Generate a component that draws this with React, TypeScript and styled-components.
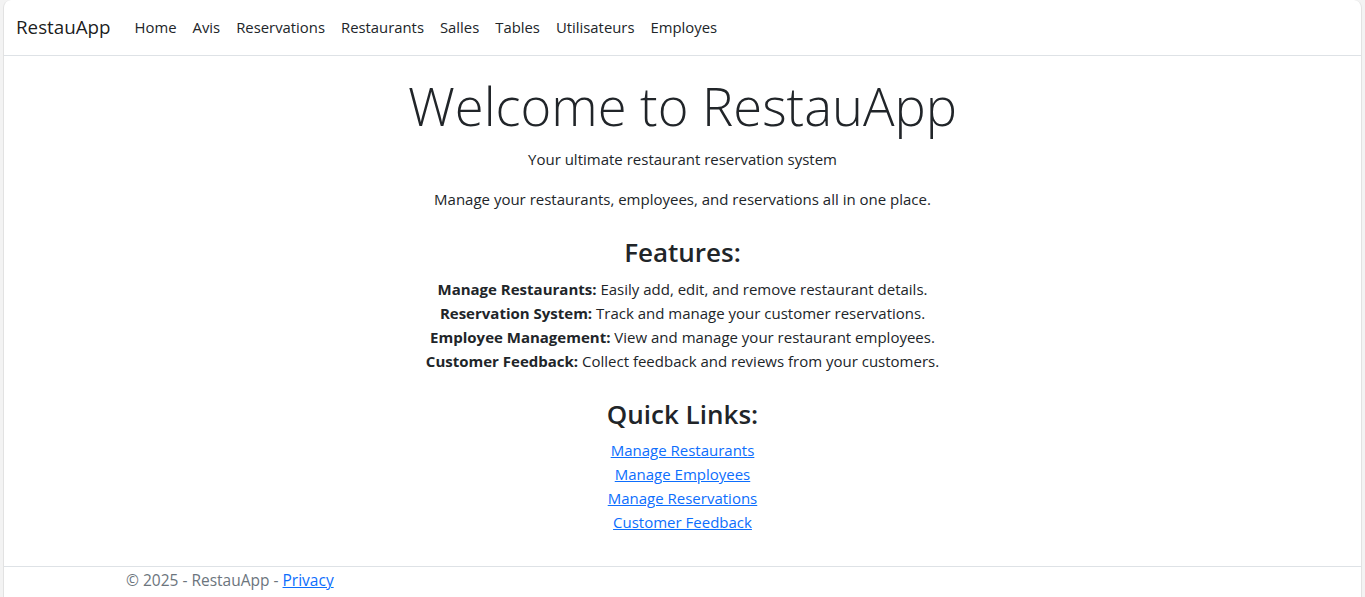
import React from "react";
import styled, { createGlobalStyle } from "styled-components";

const Global = createGlobalStyle`
  html, body { margin: 0; padding: 0; }
  body {
    background: #f3f3f3;
    font-family: "Open Sans", "Noto Sans", Arial, sans-serif;
    font-size: 15px;
    line-height: 24px;
    color: #212529;
  }
  * { box-sizing: border-box; }
`;

const Frame = styled.div`
  margin: 0 3px;
  min-height: 597px;
  background: #fff;
  border-left: 1px solid #e2e2e2;
  border-right: 1px solid #e2e2e2;
  border-top-left-radius: 8px;
  border-top-right-radius: 8px;
  display: flex;
  flex-direction: column;
`;

const NavBar = styled.nav`
  height: 56px;
  border-bottom: 1px solid #dee2e6;
  display: flex;
  align-items: center;
  padding: 0 12px 2px;
`;

const Brand = styled.a`
  font-size: 18.8px;
  line-height: 30px;
  color: rgba(0, 0, 0, 0.9);
  text-decoration: none;
  margin-right: 16px;
`;

const NavList = styled.ul`
  list-style: none;
  display: flex;
  margin: 0;
  padding: 0;
`;

const NavLink = styled.a`
  display: block;
  padding: 8px;
  font-size: 14.85px;
  line-height: 24px;
  color: #212529;
  text-decoration: none;
`;

const Main = styled.main`
  flex: 1;
  text-align: center;
  padding-top: 16px;
`;

const Title = styled.h1`
  font-size: 52.5px;
  font-weight: 300;
  line-height: 67px;
  margin: 0 0 8px;
`;

const Para = styled.p`
  margin: 0 0 16px;
`;

const SectionTitle = styled.h3`
  font-size: 26px;
  font-weight: 600;
  line-height: 33.6px;
  margin: 24px 0 8px;
  position: relative;
  top: 1px;
`;

const PlainList = styled.ul`
  list-style: none;
  margin: 0 0 16px;
  padding: 0;
`;

const Link = styled.a`
  color: #0d6efd;
  text-decoration: underline;
`;

const Footer = styled.footer`
  border-top: 1px solid #dee2e6;
  height: 31px;
  color: #6c757d;
  font-size: 15.5px;
  line-height: 27px;
  margin-top: 3px;
`;

const FooterInner = styled.div`
  max-width: 1137px;
  margin: 0 auto;
  padding: 0 12px;
  white-space: nowrap;
`;

const navItems = ["Home", "Avis", "Reservations", "Restaurants", "Salles", "Tables", "Utilisateurs", "Employes"];

const features: [string, string][] = [
  ["Manage Restaurants:", "Easily add, edit, and remove restaurant details."],
  ["Reservation System:", "Track and manage your customer reservations."],
  ["Employee Management:", "View and manage your restaurant employees."],
  ["Customer Feedback:", "Collect feedback and reviews from your customers."],
];

const links = ["Manage Restaurants", "Manage Employees", "Manage Reservations", "Customer Feedback"];

export default function App() {
  return (
    <>
      <Global />
      <Frame>
        <NavBar>
          <Brand href="#">RestauApp</Brand>
          <NavList>
            {navItems.map((n) => (
              <li key={n}>
                <NavLink href="#">{n}</NavLink>
              </li>
            ))}
          </NavList>
        </NavBar>
        <Main>
          <Title>Welcome to RestauApp</Title>
          <Para>Your ultimate restaurant reservation system</Para>
          <Para>Manage your restaurants, employees, and reservations all in one place.</Para>
          <SectionTitle>Features:</SectionTitle>
          <PlainList>
            {features.map(([b, t]) => (
              <li key={b}>
                <strong>{b}</strong> {t}
              </li>
            ))}
          </PlainList>
          <SectionTitle>Quick Links:</SectionTitle>
          <PlainList>
            {links.map((l) => (
              <li key={l}>
                <Link href="#">{l}</Link>
              </li>
            ))}
          </PlainList>
        </Main>
        <Footer>
          <FooterInner>
            © 2025 - RestauApp - <Link href="#">Privacy</Link>
          </FooterInner>
        </Footer>
      </Frame>
    </>
  );
}
